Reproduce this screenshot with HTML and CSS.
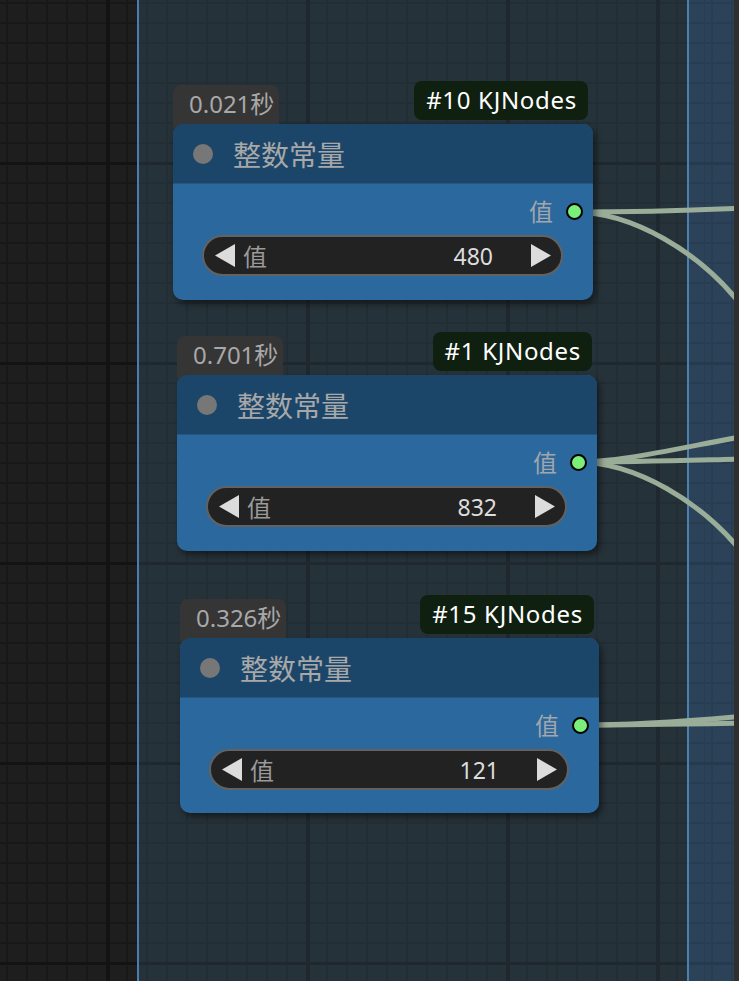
FILE: index.html
```html
<!DOCTYPE html>
<html lang="zh">
<head>
<meta charset="utf-8">
<title>Nodes</title>
<link rel="stylesheet" href="styles.css">
</head>
<body>
<div class="canvas">
  <div class="panes">
    <div class="pane pane-left"></div>
    <div class="pane pane-group"></div>
    <div class="pane pane-right"></div>
    <div class="pane pane-edge"></div>
  </div>

  <svg class="links" width="734" height="981" viewBox="0 0 734 981">
    <g fill="none" stroke="#9aad98" stroke-width="5" stroke-linecap="round">
      <path d="M574 212 C640 212 700 210 745 208"/>
      <path d="M574 212 C630 212 700 250 745 310"/>
      <path d="M577 462 C620 462 660 452 745 436"/>
      <path d="M577 462 C640 462 700 460 745 459"/>
      <path d="M577 462 C633 462 703 500 748 560"/>
      <path d="M580 725 C640 725 690 721 745 716"/>
      <path d="M580 725 C640 725 690 724 745 723"/>
    </g>
  </svg>

  <div class="node node-a">
    <div class="timer">0.021秒</div>
    <div class="node-id">#10 KJNodes</div>
    <div class="node-title"><span class="title-dot"></span><span class="title-text">整数常量</span></div>
    <div class="node-body">
      <div class="output"><span class="output-label">值</span><span class="slot"></span></div>
      <div class="widget">
        <svg class="arrow" width="20" height="23" viewBox="0 0 20 23"><polygon points="20,0 20,23 0,11.5" fill="#dcdcdc"/></svg>
        <span class="widget-label">值</span>
        <span class="widget-value">480</span>
        <svg class="arrow" width="20" height="23" viewBox="0 0 20 23"><polygon points="0,0 0,23 20,11.5" fill="#dcdcdc"/></svg>
      </div>
    </div>
  </div>

  <div class="node node-b">
    <div class="timer">0.701秒</div>
    <div class="node-id">#1 KJNodes</div>
    <div class="node-title"><span class="title-dot"></span><span class="title-text">整数常量</span></div>
    <div class="node-body">
      <div class="output"><span class="output-label">值</span><span class="slot"></span></div>
      <div class="widget">
        <svg class="arrow" width="20" height="23" viewBox="0 0 20 23"><polygon points="20,0 20,23 0,11.5" fill="#dcdcdc"/></svg>
        <span class="widget-label">值</span>
        <span class="widget-value">832</span>
        <svg class="arrow" width="20" height="23" viewBox="0 0 20 23"><polygon points="0,0 0,23 20,11.5" fill="#dcdcdc"/></svg>
      </div>
    </div>
  </div>

  <div class="node node-c">
    <div class="timer">0.326秒</div>
    <div class="node-id">#15 KJNodes</div>
    <div class="node-title"><span class="title-dot"></span><span class="title-text">整数常量</span></div>
    <div class="node-body">
      <div class="output"><span class="output-label">值</span><span class="slot"></span></div>
      <div class="widget">
        <svg class="arrow" width="20" height="23" viewBox="0 0 20 23"><polygon points="20,0 20,23 0,11.5" fill="#dcdcdc"/></svg>
        <span class="widget-label">值</span>
        <span class="widget-value">121</span>
        <svg class="arrow" width="20" height="23" viewBox="0 0 20 23"><polygon points="0,0 0,23 20,11.5" fill="#dcdcdc"/></svg>
      </div>
    </div>
  </div>
</div>
</body>
</html>
```

FILE: styles.css
```css
* { box-sizing: border-box; }

html, body {
  margin: 0;
  padding: 0;
  background: #1e1e1e;
  overflow: hidden;
}

body {
  width: 739px;
  height: 981px;
  font-family: "Noto Sans", "Noto Sans CJK SC", sans-serif;
}

.canvas {
  position: relative;
  width: 739px;
  height: 981px;
  overflow: hidden;
}

.panes {
  display: flex;
  height: 981px;
}

.pane {
  height: 100%;
  background-origin: border-box;
}

.pane-left,
.pane-group,
.pane-right {
  background-image:
    repeating-linear-gradient(90deg, transparent 0 106px, var(--major) 106px 110px, transparent 110px 200px),
    repeating-linear-gradient(180deg, transparent 0 162px, var(--major) 162px 165px, transparent 165px 200px),
    repeating-linear-gradient(90deg, transparent 0 6px, var(--minor) 6px 8px, transparent 8px 20px),
    repeating-linear-gradient(180deg, transparent 0 2px, var(--minor) 2px 4px, transparent 4px 20px);
}

.pane-left {
  width: 137px;
  --major: #131313;
  --minor: #181818;
  background-color: #1e1e1e;
}

.pane-group {
  width: 550px;
  border-left: 2px solid #4a7db0;
  --major: #1e282e;
  --minor: #222d34;
  background-color: #263239;
  background-position: -137px 0;
}

.pane-right {
  width: 47px;
  border-left: 2px solid #4a80b2;
  --major: #263a4f;
  --minor: #283c52;
  background-color: #2c4259;
  background-position: -687px 0;
}

.pane-edge {
  width: 5px;
  background: #2f2f2f;
}

.links {
  position: absolute;
  left: 0;
  top: 0;
}

.node {
  position: absolute;
  z-index: 0;
  width: 420px;
  height: 176px;
  border-radius: 10px;
  background: #2a689e;
  box-shadow: 3px 4px 6px rgba(0, 0, 0, 0.45);
}

.node-a { left: 173px; top: 124px; }
.node-b { left: 177px; top: 375px; }
.node-c { left: 180px; top: 638px; width: 419px; height: 175px; }

.timer {
  position: absolute;
  z-index: -1;
  left: 0;
  top: -39px;
  height: 48px;
  padding: 4px 0 0 16px;
  width: 106px;
  border-radius: 8px;
  background: #353535;
  color: #a8a8a8;
  font-size: 24px;
  line-height: 30px;
  white-space: nowrap;
}

.node-id {
  position: absolute;
  right: 5px;
  top: -43px;
  height: 39px;
  padding: 0 11px 0 12px;
  border-radius: 8px;
  background: #0f1f10;
  color: #ffffff;
  font-size: 24px;
  letter-spacing: 0.7px;
  line-height: 38px;
  white-space: nowrap;
}

.node-title {
  height: 60px;
  display: flex;
  align-items: center;
  gap: 20px;
  padding-left: 20px;
  background: #1c4669;
  border-radius: 10px 10px 0 0;
  border-bottom: 1px solid #245680;
}

.title-dot {
  width: 20px;
  height: 20px;
  border-radius: 50%;
  background: #777777;
}

.title-text {
  color: #a8a8a8;
  font-size: 28px;
  line-height: 34px;
  font-family: "Noto Sans CJK SC", sans-serif;
}

.node-body {
  display: flex;
  flex-direction: column;
  padding: 15px 10px 0 29px;
}

.output {
  height: 24px;
  display: flex;
  justify-content: flex-end;
  align-items: center;
  gap: 13px;
}

.output-label {
  color: #a2a6aa;
  font-size: 24px;
  line-height: 24px;
  font-family: "Noto Sans CJK SC", sans-serif;
}

.slot {
  width: 17px;
  height: 17px;
  border-radius: 50%;
  background: #7af07a;
  border: 2px solid #000;
}

.widget {
  margin-top: 12px;
  margin-right: 20px;
  height: 41px;
  border-radius: 21px;
  background: #222222;
  border: 2px solid #626262;
  display: flex;
  align-items: center;
  padding: 0 10px 0 11px;
}

.arrow {
  flex: none;
  display: block;
}

.widget-label {
  margin-left: 8px;
  flex: 1;
  color: #9a9a9a;
  font-size: 24px;
  line-height: 30px;
  font-family: "Noto Sans CJK SC", sans-serif;
}

.widget-value {
  margin-right: 38px;
  color: #dddddd;
  font-size: 23px;
  line-height: 30px;
}
```
